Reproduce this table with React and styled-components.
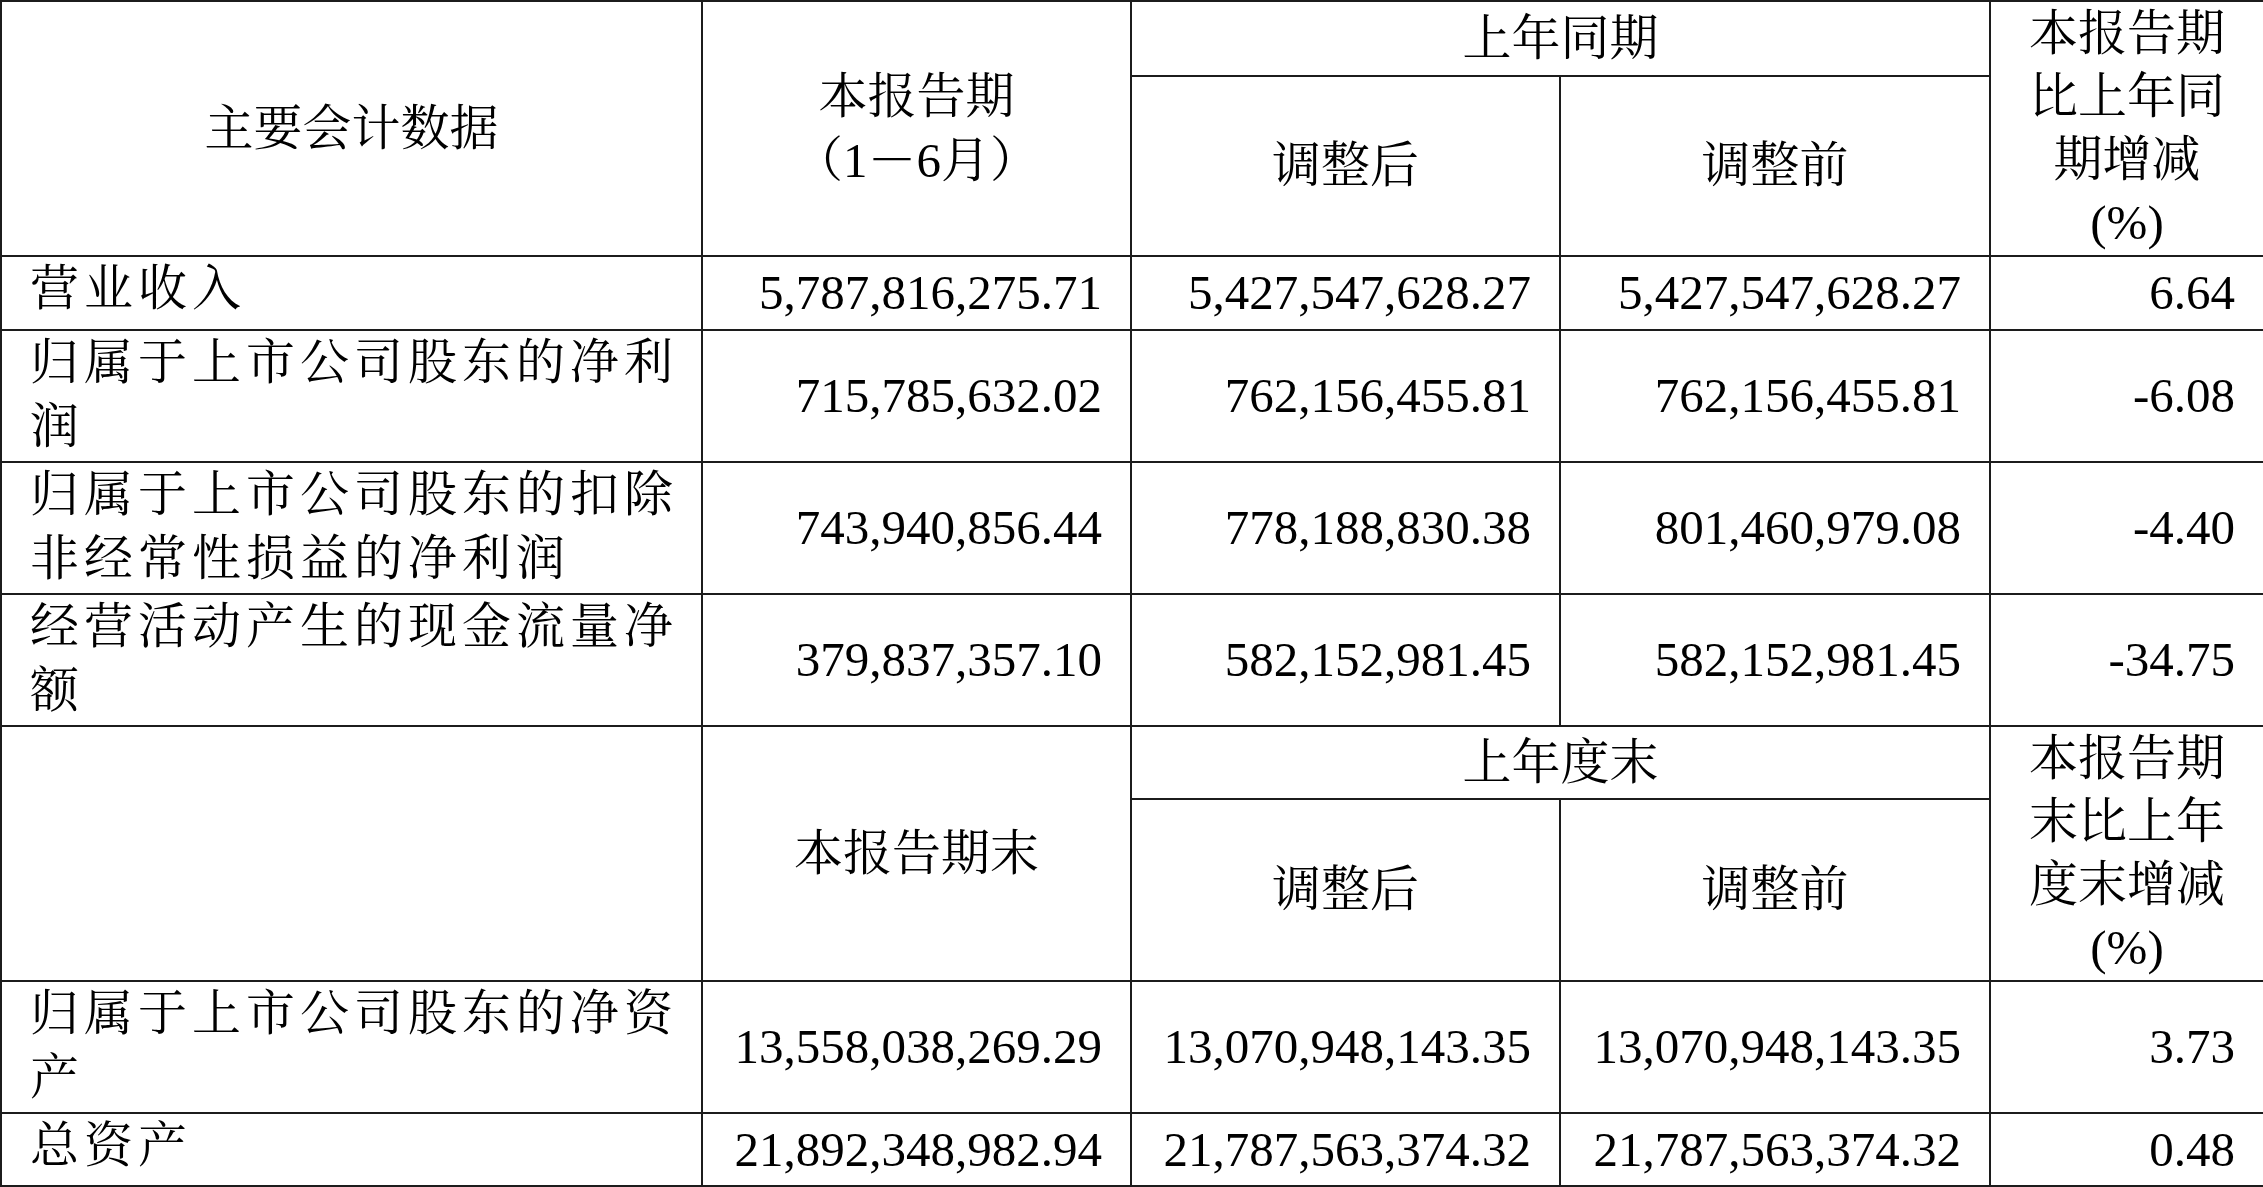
import React from 'react';
import styled, { createGlobalStyle } from 'styled-components';

const GlobalStyle = createGlobalStyle`
  html, body {
    margin: 0;
    padding: 0;
    background: #fff;
  }
  body {
    font-family: "Liberation Serif", "Noto Serif CJK SC", "Noto Sans CJK SC", serif;
    color: #000;
  }
`;

const periodRows = [
  { label: '营业收入', values: ['5,787,816,275.71', '5,427,547,628.27', '5,427,547,628.27', '6.64'], h: 74 },
  { label: '归属于上市公司股东的净利润', values: ['715,785,632.02', '762,156,455.81', '762,156,455.81', '-6.08'], h: 132 },
  { label: '归属于上市公司股东的扣除非经常性损益的净利润', values: ['743,940,856.44', '778,188,830.38', '801,460,979.08', '-4.40'], h: 132 },
  { label: '经营活动产生的现金流量净额', values: ['379,837,357.10', '582,152,981.45', '582,152,981.45', '-34.75'], h: 132 },
];

const balanceRows = [
  { label: '归属于上市公司股东的净资产', values: ['13,558,038,269.29', '13,070,948,143.35', '13,070,948,143.35', '3.73'], h: 132 },
  { label: '总资产', values: ['21,892,348,982.94', '21,787,563,374.32', '21,787,563,374.32', '0.48'], h: 73 },
];

const App = () => {
  return (
    <>
      <GlobalStyle />
      <Table>
        <colgroup>
          <col style={{ width: 701 }} />
          <col style={{ width: 429 }} />
          <col style={{ width: 429 }} />
          <col style={{ width: 430 }} />
          <col style={{ width: 274 }} />
        </colgroup>
        <tbody>
          <Row $h={75}>
            <HeadCell rowSpan={2}>主要会计数据</HeadCell>
            <HeadCell rowSpan={2}>
              本报告期
              <br />
              （1－6月）
            </HeadCell>
            <HeadCell colSpan={2}>上年同期</HeadCell>
            <ChangeHead rowSpan={2}>
              本报告期
              <br />
              比上年同
              <br />
              期增减
              <br />
              (%)
            </ChangeHead>
          </Row>
          <Row $h={180}>
            <HeadCell>调整后</HeadCell>
            <HeadCell>调整前</HeadCell>
          </Row>
          {periodRows.map(r => (
            <Row key={r.label} $h={r.h}>
              <LabelCell>{r.label}</LabelCell>
              {r.values.map((v, i) => (
                <NumCell key={i}>{v}</NumCell>
              ))}
            </Row>
          ))}
          <Row $h={73}>
            <HeadCell rowSpan={2} />
            <HeadCell rowSpan={2}>本报告期末</HeadCell>
            <HeadCell colSpan={2}>上年度末</HeadCell>
            <ChangeHead rowSpan={2}>
              本报告期
              <br />
              末比上年
              <br />
              度末增减
              <br />
              (%)
            </ChangeHead>
          </Row>
          <Row $h={182}>
            <HeadCell>调整后</HeadCell>
            <HeadCell>调整前</HeadCell>
          </Row>
          {balanceRows.map(r => (
            <Row key={r.label} $h={r.h}>
              <LabelCell>{r.label}</LabelCell>
              {r.values.map((v, i) => (
                <NumCell key={i}>{v}</NumCell>
              ))}
            </Row>
          ))}
        </tbody>
      </Table>
    </>
  );
};

const Table = styled.table`
  width: 2263px;
  table-layout: fixed;
  border-collapse: collapse;
  font-size: 49px;
  line-height: 64px;
`;

const Row = styled.tr`
  height: ${p => p.$h}px;
`;

const Cell = styled.td`
  border: 2px solid #1c1c1c;
  padding: 0;
  overflow: hidden;
`;

const HeadCell = styled(Cell)`
  text-align: center;
  vertical-align: middle;
`;

const ChangeHead = styled(HeadCell)`
  vertical-align: top;
  line-height: 63px;
  padding-top: 0;
`;

const LabelCell = styled(Cell)`
  text-align: left;
  vertical-align: top;
  letter-spacing: 5px;
  padding: 0 20px 0 28px;
`;

const NumCell = styled(Cell)`
  text-align: right;
  vertical-align: middle;
  padding-right: 28px;
  white-space: nowrap;
`;

export default App;
